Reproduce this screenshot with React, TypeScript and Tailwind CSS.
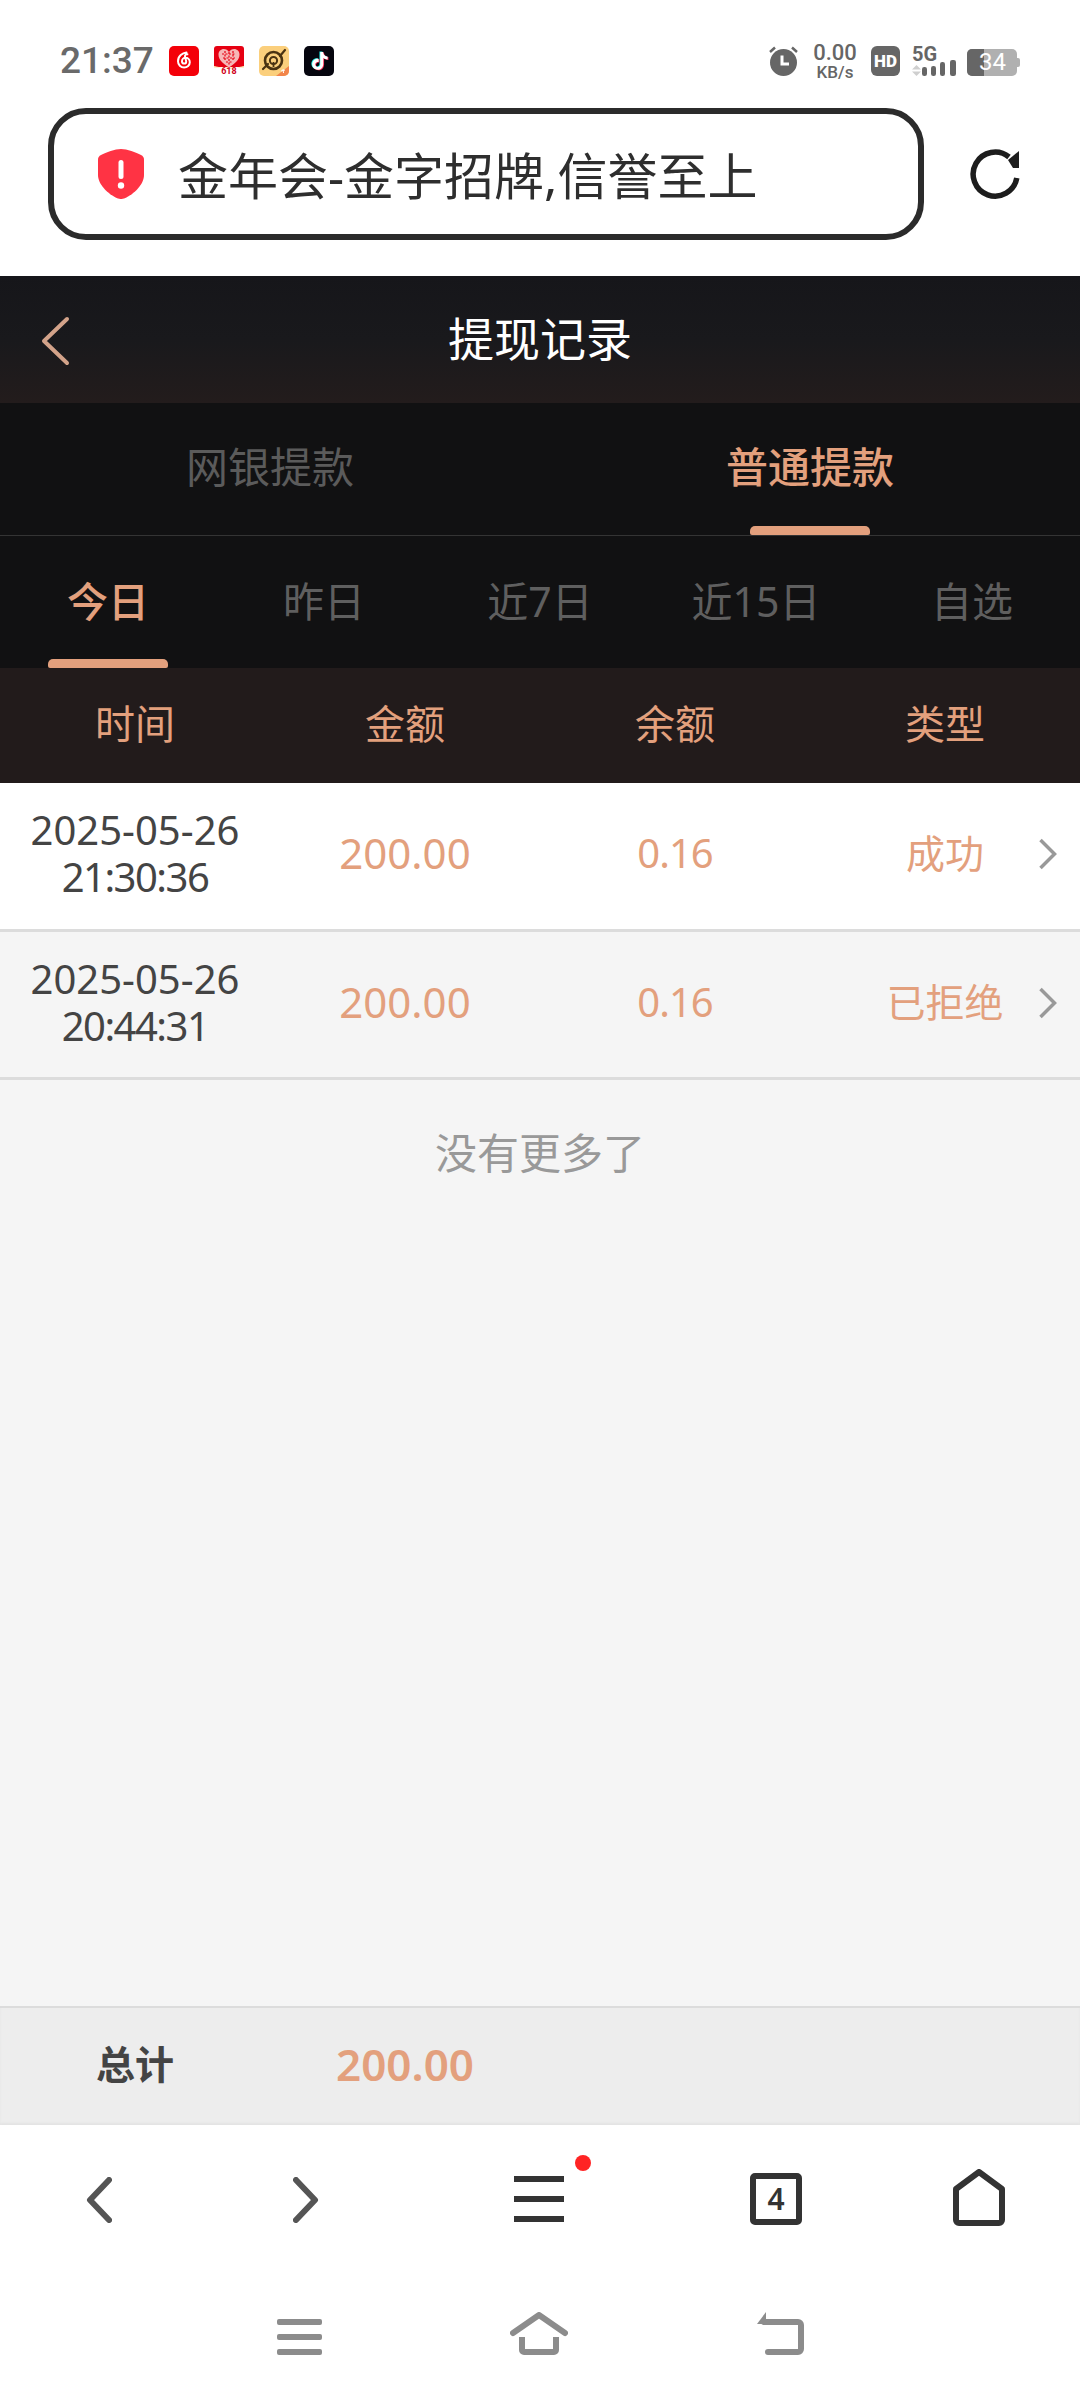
import React from "react";

const records = [
  { date: "2025-05-26", time: "21:30:36", amount: "200.00", balance: "0.16", status: "成功", bg: "bg-white" },
  { date: "2025-05-26", time: "20:44:31", amount: "200.00", balance: "0.16", status: "已拒绝", bg: "bg-[#f5f5f5]" },
];

const Netease = () => (
  <svg width="30" height="30" viewBox="0 0 30 30">
    <rect width="30" height="30" rx="5" fill="#f40009" />
    <path d="M17.5 6.5c-4 .6-8.5 3.4-8.5 8.7 0 3.6 2.8 6.3 6.1 6.3 3.2 0 5.7-2.3 5.7-5.2 0-2.8-2.1-4.5-4.2-4.5-2 0-3.6 1.5-3.6 3.4 0 1.4.9 2.4 2.1 2.4 1.3 0 2.1-1 2.1-2.2l-1.2-4.8c-.3-1.400.8-2.500 2.400-2.300" fill="none" stroke="#fff" strokeWidth="2" strokeLinecap="round" />
  </svg>
);

const HeartBadge = () => (
  <div className="relative w-[30px] h-[30px]">
    <svg width="30" height="30" viewBox="0 0 30 30" className="absolute inset-0">
      <path d="M0 3a3 3 0 0 1 3-3h24a3 3 0 0 1 3 3v17l-2 1H2l-2-1z" fill="#e60012" />
      <path d="M0 20l15 3 15-3v1.500H0z" fill="#ffd9a0" />
      <path d="M15 21.500C9 17.500 4.500 14 4.500 8.500c0-3.200 2.400-5.500 5.300-5.500 2.200 0 4 1.100 5.200 3 1.200-1.900 3-3 5.200-3 2.900 0 5.300 2.300 5.300 5.500 0 5.500-4.500 9-10.500 13z" fill="#f6b6b6" />
      <path d="M8 8h14M9 12h12M12 16h6M11 5v9M15 6v13M19 5v9" stroke="#e60012" strokeWidth="1.200" strokeDasharray="2 1.500" />
    </svg>
    <span className="absolute bottom-0 left-0 right-0 text-center text-[9px] leading-[9px] font-bold text-[#d0021b]">618</span>
  </div>
);

const GoldBadge = () => (
  <svg width="30" height="30" viewBox="0 0 30 30">
    <rect width="30" height="30" rx="5" fill="#fbcf7c" />
    <circle cx="14.500" cy="14.500" r="8.500" fill="none" stroke="#4a3312" strokeWidth="2.600" />
    <circle cx="14.500" cy="14.500" r="3.600" fill="none" stroke="#4a3312" strokeWidth="2" />
    <path d="M14.500 16v5" stroke="#4a3312" strokeWidth="1.800" />
    <path d="M4 23 9 18M21 10l5-6" stroke="#4a3312" strokeWidth="2.200" strokeLinecap="round" />
    <path d="M30 20v5a5 5 0 0 1-5 5h-8z" fill="#f2854b" />
    <path d="M22 25l4-1M24 23l.5 4" stroke="#fff" strokeWidth="1" />
  </svg>
);

const TIKTOK =
  "M12.525.02c1.31-.02 2.61-.01 3.91-.02.08 1.530.630 3.090 1.750 4.170 1.120 1.110 2.700 1.620 4.240 1.790v4.030c-1.440-.050-2.890-.350-4.200-.970-.570-.260-1.100-.590-1.620-.930-.010 2.920.010 5.840-.020 8.750-.080 1.400-.540 2.790-1.350 3.940-1.310 1.920-3.580 3.170-5.910 3.210-1.430.080-2.860-.310-4.080-1.030-2.020-1.190-3.440-3.370-3.650-5.710-.020-.500-.030-1-.010-1.490.180-1.900 1.120-3.720 2.580-4.960 1.660-1.440 3.980-2.130 6.150-1.720.020 1.480-.040 2.960-.040 4.440-.990-.320-2.150-.230-3.020.370-.630.410-1.110 1.040-1.360 1.750-.210.510-.150 1.070-.140 1.610.240 1.640 1.820 3.020 3.500 2.870 1.120-.010 2.190-.660 2.770-1.610.190-.330.400-.670.410-1.060.100-1.790.060-3.570.070-5.360.010-4.030-.010-8.050.020-12.070z";

const TikTok = () => (
  <svg width="30" height="30" viewBox="0 0 30 30">
    <rect width="30" height="30" rx="5" fill="#06060f" />
    <g transform="translate(6.200 5.600) scale(.74)">
      <path d={TIKTOK} fill="#25f4ee" />
    </g>
    <g transform="translate(7.800 6.600) scale(.74)">
      <path d={TIKTOK} fill="#fe2c55" />
    </g>
    <g transform="translate(7 6.100) scale(.74)">
      <path d={TIKTOK} fill="#fff" />
    </g>
  </svg>
);

const Alarm = () => (
  <svg width="29" height="30" viewBox="0 0 29 30">
    <circle cx="14.500" cy="16.500" r="13.500" fill="#666" />
    <path d="M13 9.500v8.500h7" fill="none" stroke="#fff" strokeWidth="3" />
    <path d="M1 6l5-4.500M28 6l-5-4.500" stroke="#666" strokeWidth="2.500" />
  </svg>
);

const Signal = () => (
  <div className="relative w-[45px] h-[30px]">
    <span className="absolute left-0 top-0 text-[20px] leading-[16px] font-bold text-[#666] font-['Roboto',sans-serif]">5G</span>
    <svg width="45" height="30" viewBox="0 0 45 30" className="absolute left-0 top-0">
      <path d="M0 23.500 4.500 19 9 23.500zM0 25.500 4.500 30 9 25.500z" fill="#cfcfcf" />
      <rect x="10" y="21" width="5" height="9" rx="2.200" fill="#666" />
      <rect x="19" y="20" width="5" height="10" rx="2.200" fill="#666" />
      <rect x="28" y="16" width="5" height="14" rx="2.200" fill="#666" />
      <rect x="38" y="14" width="6" height="16" rx="2.200" fill="#666" />
    </svg>
  </div>
);

const Battery = () => (
  <div className="relative w-[53px] h-[27px] flex items-center justify-center">
    <div className="absolute left-0 top-0 h-[27px] w-[50px] rounded-[5px] bg-[#b0b0b0] overflow-hidden">
      <div className="h-full w-[17px] bg-[#666]" />
    </div>
    <div className="absolute right-0 top-[9px] h-[9px] w-[3px] rounded-r-[2px] bg-[#b0b0b0]" />
    <span className="relative pr-[2px] text-[24px] leading-[27px] text-white font-['Roboto',sans-serif]">34</span>
  </div>
);

const StatusBar = () => (
  <div className="h-[108px] flex justify-between pt-[46px] pl-[60px] pr-[60px] font-['Roboto',sans-serif] text-[#666]">
    <div className="flex items-start">
      <span className="text-[37px] leading-[30px] font-medium text-[#6a6a6a]">21:37</span>
      <div className="flex gap-[15px] ml-[15px]">
        <Netease />
        <HeartBadge />
        <GoldBadge />
        <TikTok />
      </div>
    </div>
    <div className="flex items-start">
      <Alarm />
      <div className="ml-[16px] flex flex-col items-center w-[42px] -mt-[3px]">
        <span className="text-[22px] leading-[19px] font-medium">0.00</span>
        <span className="text-[17px] leading-[16px] mt-[2px] font-medium">KB/s</span>
      </div>
      <div className="ml-[15px] w-[29px] h-[30px] rounded-[6px] bg-[#666] flex items-center justify-center text-white text-[17px] font-black leading-none">HD</div>
      <div className="ml-[12px]">
        <Signal />
      </div>
      <div className="ml-[10px] mt-[3px]">
        <Battery />
      </div>
    </div>
  </div>
);

const AddressBar = () => (
  <div className="h-[168px] flex items-start pl-[48px]">
    <div className="w-[876px] h-[132px] rounded-[38px] border-[6px] border-[#2b2b2b] flex items-center pl-[44px]">
      <svg width="46" height="50" viewBox="0 0 46 50">
        <path d="M23 0c6 0 15 3.500 20 6 2 1 3 2.500 3 4.500V26c0 11-13 21-20 23.500-2 .700-4 .700-6 0C13 47 0 37 0 26V10.500C0 8.500 1 7 3 6 8 3.500 17 0 23 0z" fill="#ff3344" />
        <rect x="20.500" y="11" width="5" height="19" rx="2.500" fill="#fff" />
        <circle cx="23" cy="36.500" r="3.200" fill="#fff" />
      </svg>
      <span className="ml-[34px] mt-[3px] text-[50px] leading-[60px] text-[#2e2e2e]">金年会-金字招牌,信誉至上</span>
    </div>
    <svg width="50" height="50" viewBox="0 0 50 50" className="ml-[46px] mt-[41px]">
      <path d="M46.800 29A22 22 0 1 1 39 8" fill="none" stroke="#1d1d1d" strokeWidth="5.500" />
      <path d="M49 2v17H43l-5-8z" fill="#1d1d1d" />
    </svg>
  </div>
);

const PageHeader = () => (
  <div className="relative h-[127px] flex items-center justify-center bg-gradient-to-b from-[#16161a] via-[#19191c] to-[#231c1c]">
    <svg width="30" height="50" viewBox="0 0 30 50" className="absolute left-[40px] top-[40px]">
      <path d="M27 3 4 25l23 22" fill="none" stroke="#d3a38a" strokeWidth="4" strokeLinecap="round" strokeLinejoin="round" />
    </svg>
    <span className="text-[46px] leading-[60px] text-white -mt-[4px]">提现记录</span>
  </div>
);

const MainTabs = () => (
  <div className="h-[133px] grid grid-cols-2 bg-[#111112] border-b border-[#343434]">
    <div className="flex items-center justify-center text-[42px] text-[#5b5b5b] leading-[56px] -mt-[5px]">网银提款</div>
    <div className="relative flex items-center justify-center text-[42px] leading-[56px] font-medium text-[#e3a07d]">
      <span className="-mt-[5px]">普通提款</span>
      <div className="absolute bottom-0 left-[210px] w-[120px] h-[9px] rounded-t-[5px] rounded-b-[2px] bg-[#e3a07d]" />
    </div>
  </div>
);

const RangeTabs = () => (
  <div className="h-[132px] grid grid-cols-5 bg-[#111112]">
    {["今日", "昨日", "近7日", "近15日", "自选"].map((label, i) => (
      <div key={label} className={`relative flex items-center justify-center text-[41px] leading-[54px] ${i === 0 ? "text-[#e3a07d] font-medium" : "text-[#5f5f5f]"}`}>
        <span className="-mt-[2px]">{label}</span>
        {i === 0 && <div className="absolute bottom-0 left-[48px] w-[120px] h-[9px] rounded-t-[5px] rounded-b-[2px] bg-[#e3a07d]" />}
      </div>
    ))}
  </div>
);

const TableHead = () => (
  <div className="h-[115px] grid grid-cols-4 bg-[#221b1b]">
    {["时间", "金额", "余额", "类型"].map((label) => (
      <div key={label} className="flex items-center justify-center text-[40px] leading-[52px] text-[#e3a07d]">
        <span className="-mt-[4px]">{label}</span>
      </div>
    ))}
  </div>
);

const Row = ({ r }: { r: (typeof records)[number] }) => (
  <div className={`relative h-[148.5px] grid grid-cols-4 items-center border-b-[3px] border-[#dcdcdc] ${r.bg}`}>
    <div className="flex flex-col items-center text-[40px] leading-[47px] text-[#444] -mt-[5px]">
      <span>{r.date}</span>
      <span className="tracking-[-1.500px]">{r.time}</span>
    </div>
    <div className="text-center text-[42px] leading-[54px] text-[#e3a07d] -mt-[5px]">{r.amount}</div>
    <div className="text-center text-[40px] leading-[54px] text-[#e3a07d] tracking-[-1px] -mt-[5px]">{r.balance}</div>
    <div className="text-center text-[39px] leading-[54px] text-[#e3a07d] -mt-[5px]">{r.status}</div>
    <svg width="20" height="32" viewBox="0 0 20 32" className="absolute right-[22px] top-[55px]">
      <path d="M2.500 2 16.500 16 2.500 30" fill="none" stroke="#999" strokeWidth="3.500" />
    </svg>
  </div>
);

const Totals = () => (
  <div className="h-[119px] grid grid-cols-4 items-center bg-[#ededed] border-t-2 border-[#dcdcdc] shadow-[inset_0_-2px_2px_#e4e4e4]">
    <div className="text-center text-[39px] leading-[50px] font-bold text-[#444] -mt-[5px]">总计</div>
    <div className="text-center text-[44px] leading-[50px] font-semibold text-[#e3a07d] -mt-[5px]">200.00</div>
  </div>
);

const Toolbar = () => (
  <div className="relative h-[140px] flex items-start pt-[44px] pl-[86px]">
    <svg width="26" height="46" viewBox="0 0 26 46" className="mt-[8px]">
      <path d="M23 3 4 23l19 20" fill="none" stroke="#555" strokeWidth="6" strokeLinecap="round" strokeLinejoin="round" />
    </svg>
    <svg width="26" height="46" viewBox="0 0 26 46" className="ml-[181px] mt-[8px]">
      <path d="M3 3l19 20L3 43" fill="none" stroke="#555" strokeWidth="6" strokeLinecap="round" strokeLinejoin="round" />
    </svg>
    <div className="relative ml-[195px] mt-[7px] flex flex-col gap-[14px] w-[50px]">
      <div className="h-[6px] bg-[#333]" />
      <div className="h-[6px] bg-[#333]" />
      <div className="h-[6px] bg-[#333]" />
      <div className="absolute -top-[21px] -right-[27px] w-[16px] h-[16px] rounded-full bg-[#ff2424]" />
    </div>
    <div className="ml-[186px] mt-[4px] w-[52px] h-[52px] rounded-[5px] border-[6px] border-[#333] flex items-center justify-center text-[30px] leading-none font-semibold text-[#333]">
      4
    </div>
    <svg width="52" height="57" viewBox="0 0 52 57" className="ml-[151px]">
      <path d="M26 3 3 20v31a3 3 0 0 0 3 3h40a3 3 0 0 0 3-3V20z" fill="none" stroke="#333" strokeWidth="6" strokeLinejoin="round" />
    </svg>
  </div>
);

const SystemNav = () => (
  <div className="h-[135px] flex items-start justify-center gap-[188px] pt-[47px]">
    <div className="w-[45px] flex flex-col gap-[9px] mt-[7px]">
      <div className="h-[6px] rounded-[2px] bg-[#8c8c8c]" />
      <div className="h-[6px] rounded-[2px] bg-[#8c8c8c]" />
      <div className="h-[6px] rounded-[2px] bg-[#8c8c8c]" />
    </div>
    <svg width="58" height="43" viewBox="0 0 58 43">
      <path d="M3 21 29 3l26 18" fill="none" stroke="#8c8c8c" strokeWidth="6" strokeLinecap="round" strokeLinejoin="round" />
      <path d="M12 25v13a2 2 0 0 0 2 2h30a2 2 0 0 0 2-2V25" fill="none" stroke="#8c8c8c" strokeWidth="6" />
    </svg>
    <svg width="48" height="43" viewBox="0 0 48 43">
      <path d="M8 10h34a3 3 0 0 1 3 3v24a3 3 0 0 1-3 3H12" fill="none" stroke="#8c8c8c" strokeWidth="6" strokeLinecap="round" />
      <path d="M10 0 1 12h9z" fill="#8c8c8c" />
    </svg>
  </div>
);

export default function App() {
  return (
    <div className="w-[1080px] h-[2400px] flex flex-col overflow-hidden bg-white font-['Noto_Sans','Noto_Sans_CJK_SC',sans-serif]">
      <StatusBar />
      <AddressBar />
      <PageHeader />
      <MainTabs />
      <RangeTabs />
      <TableHead />
      <main className="flex-1 bg-[#f5f5f5]">
        {records.map((r) => (
          <Row key={r.time} r={r} />
        ))}
        <div className="mt-[46px] text-center text-[42px] leading-[54px] text-[#999]">没有更多了</div>
      </main>
      <Totals />
      <Toolbar />
      <SystemNav />
    </div>
  );
}
